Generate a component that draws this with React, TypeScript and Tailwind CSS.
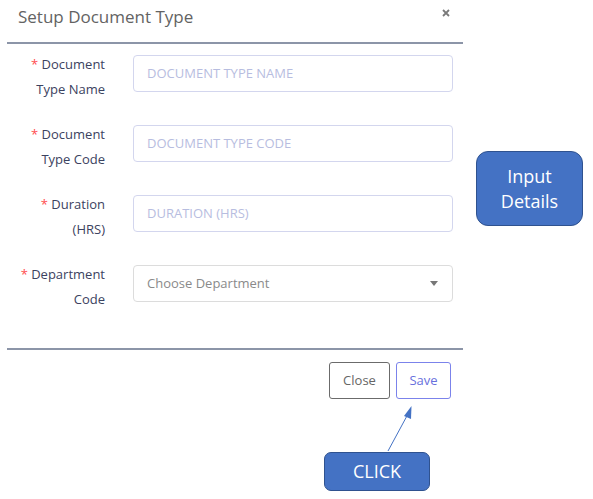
import React from 'react';

const fields = [
  { l1: 'Document', l2: 'Type Name', ph: 'DOCUMENT TYPE NAME' },
  { l1: 'Document', l2: 'Type Code', ph: 'DOCUMENT TYPE CODE' },
  { l1: 'Duration', l2: '(HRS)', ph: 'DURATION (HRS)' },
];

function Label({ l1, l2 }: { l1: string; l2: string }) {
  return (
    <div className="w-[98px] shrink-0 text-right text-[13px] leading-[25px] text-[#3b4260]">
      <div>
        <span className="text-[#ff4d4f]">*</span> {l1}
      </div>
      <div>{l2}</div>
    </div>
  );
}

export default function App() {
  return (
    <div className="relative flex w-[593px] h-[499px] bg-white overflow-hidden" style={{ fontFamily: '"Open Sans", sans-serif' }}>
      {/* Dialog */}
      <div className="w-[470px] shrink-0 flex flex-col px-[7px]">
        <div className="h-[42px] flex items-start justify-between">
          <h1 className="pl-[11px] pt-[5px] text-[17px] leading-[24px] text-[#636363]">Setup Document Type</h1>
          <svg className="mt-[9px] mr-[13px]" width="8" height="8" viewBox="0 0 8 8">
            <path d="M1 1L7 7M7 1L1 7" stroke="#7a7a7a" strokeWidth="1.8" />
          </svg>
        </div>
        <div className="h-[2px] bg-[#8c95a8]" />

        <div className="flex flex-col gap-[18px] pt-[8px]">
          {fields.map((f) => (
            <div key={f.ph} className="flex h-[52px] gap-[28px]">
              <Label l1={f.l1} l2={f.l2} />
              <div className="mt-[3px] h-[37px] w-[320px] rounded-[4px] border border-[#d3d6ee] flex items-center px-[13px] text-[13px] text-[#b7bde0]">
                {f.ph}
              </div>
            </div>
          ))}
          <div className="flex h-[52px] gap-[28px]">
            <Label l1="Department" l2="Code" />
            <div className="mt-[3px] h-[37px] w-[320px] rounded-[4px] border border-[#dcdcdc] flex items-center justify-between px-[13px] text-[13px] text-[#8a8a8a]">
              <span>Choose Department</span>
              <svg width="8" height="5" viewBox="0 0 8 5" className="mr-[1px]">
                <path d="M0 0H8L4 5Z" fill="#777" />
              </svg>
            </div>
          </div>
        </div>

        <div className="mt-[34px] h-[2px] bg-[#8c95a8]" />
        <div className="flex justify-end gap-[6px] pr-[12px] pt-[12px]">
          <button className="h-[37px] w-[61px] rounded-[3px] border border-[#6b6b6b] text-[13px] text-[#666]">Close</button>
          <button className="h-[37px] w-[55px] rounded-[3px] border border-[#7b83eb] text-[13px] text-[#6870dd]">Save</button>
        </div>
        <div className="mt-[53px] ml-[317px] h-[39px] w-[106px] rounded-[7px] border-[1.5px] border-[#2f528f] bg-[#4472c4] flex items-center justify-center text-[18px] text-white">
          CLICK
        </div>
      </div>

      {/* Callout */}
      <div className="pt-[151px] pl-[6px]">
        <div className="h-[75px] w-[107px] rounded-[12px] border-[1.5px] border-[#2f528f] bg-[#4472c4] flex flex-col items-center justify-center text-[18px] leading-[25px] text-white">
          <span>Input</span>
          <span>Details</span>
        </div>
      </div>

      {/* Arrow */}
      <svg className="absolute left-0 top-0 pointer-events-none" width="593" height="499">
        <line x1="388" y1="451" x2="408" y2="414" stroke="#4472c4" strokeWidth="1" />
        <path d="M411.5 406 L404 416 L411 419 Z" fill="#4472c4" />
      </svg>
    </div>
  );
}
